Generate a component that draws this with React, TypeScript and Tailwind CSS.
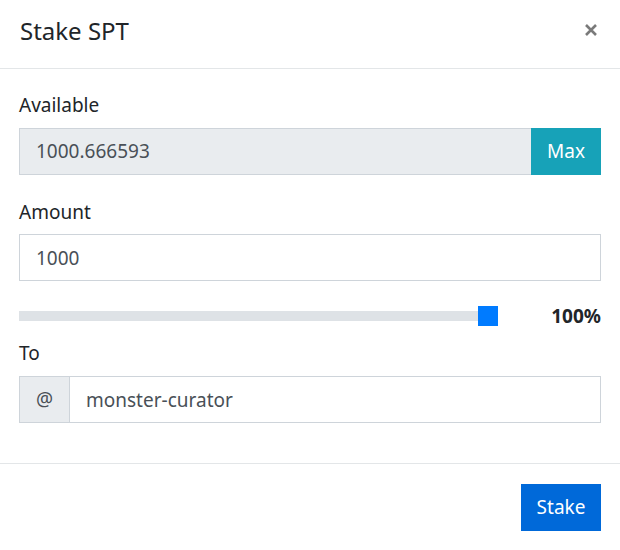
import React from 'react';

export default function App() {
  return (
    <div className="w-[620px] h-[550px] bg-white text-[#212529] font-['Noto_Sans',sans-serif] text-[19px]">
      {/* Header */}
      <div className="h-[69px] border-b border-[#e3e6e8] flex items-center justify-between pl-[20px] pr-[22px]">
        <h5 className="text-[24px] leading-none font-normal pb-[6px]">Stake SPT</h5>
        <button className="w-[14px] h-[14px] mb-[8px]">
          <svg viewBox="0 0 14 14" width="14" height="14">
            <path d="M2 2 L12 12 M12 2 L2 12" stroke="#7a7a7a" strokeWidth="2.6" strokeLinecap="butt" />
          </svg>
        </button>
      </div>

      {/* Body */}
      <div className="h-[394px] px-[19px] pt-[22px]">
        <label className="block h-[28px] leading-[28px] mb-[9px]">Available</label>
        <div className="flex h-[47px]">
          <input
            disabled
            value="1000.666593"
            className="flex-1 min-w-0 bg-[#e9ecef] border border-[#ced4da] border-r-0 px-[16px] text-[#495057] outline-none"
          />
          <button className="w-[70px] bg-[#17a2b8] text-white">Max</button>
        </div>

        <label className="block h-[28px] leading-[28px] mt-[23px] mb-[8px]">Amount</label>
        <input
          readOnly
          value="1000"
          className="block w-full h-[47px] border border-[#ced4da] px-[16px] text-[#495057] outline-none"
        />

        <div className="flex items-center h-[20px] mt-[25px]">
          <div className="flex-1 flex items-center">
            <div className="flex-1 h-[10px] bg-[#dee2e6] -mr-[2px]" />
            <div className="w-[20px] h-[20px] bg-[#007bff]" />
          </div>
          <span className="w-[103px] text-right font-bold">100%</span>
        </div>

        <label className="block h-[28px] leading-[28px] mt-[13px] mb-[9px]">To</label>
        <div className="flex h-[47px]">
          <span className="w-[50px] flex items-center justify-center bg-[#e9ecef] border border-[#ced4da] border-r-0 text-[#495057]">
            @
          </span>
          <input
            readOnly
            value="monster-curator"
            className="flex-1 min-w-0 border border-[#ced4da] px-[16px] pt-[2px] text-[#495057] outline-none"
          />
        </div>
      </div>

      {/* Footer */}
      <div className="border-t border-[#e3e6e8] flex justify-end px-[19px] pt-[20px]">
        <button className="w-[80px] h-[47px] bg-[#0069d9] text-white">Stake</button>
      </div>
    </div>
  );
}
